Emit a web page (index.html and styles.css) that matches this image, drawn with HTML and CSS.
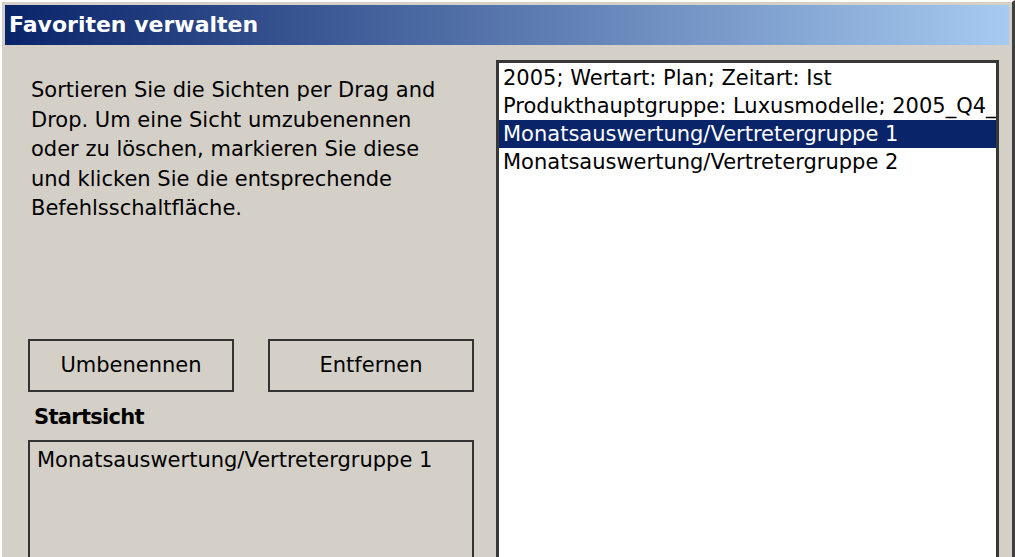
FILE: index.html
```html
<!DOCTYPE html>
<html lang="de">

<head>
  <meta charset="UTF-8">
  <title>Favoriten verwalten</title>
  <link rel="stylesheet" href="styles.css">
</head>

<body>
  <div class="window">
    <div class="titlebar">Favoriten verwalten</div>

    <div class="content">
      <div class="left">
        <p class="intro">Sortieren Sie die Sichten per Drag and Drop. Um eine Sicht umzubenennen oder zu löschen, markieren Sie diese und klicken Sie die entsprechende Befehlsschaltfläche.</p>

        <div class="actions">
          <button class="btn">Umbenennen</button>
          <button class="btn">Entfernen</button>
        </div>

        <div class="start-label">Startsicht</div>
        <div class="start-box">Monatsauswertung/Vertretergruppe 1</div>
      </div>

      <ul class="listbox">
        <li>2005; Wertart: Plan; Zeitart: Ist</li>
        <li>Produkthauptgruppe: Luxusmodelle; 2005_Q4_</li>
        <li class="selected">Monatsauswertung/Vertretergruppe 1</li>
        <li>Monatsauswertung/Vertretergruppe 2</li>
      </ul>
    </div>
  </div>
</body>

</html>
```

FILE: styles.css
```css
body {
  margin: 0;
  padding: 0;
  font-family: "DejaVu Sans", Verdana, sans-serif;
  font-size: 21px;
  color: black;
  background: #d4d0c8;
}

.window {
  width: 1015px;
  height: 557px;
  box-sizing: border-box;
  overflow: hidden;
  background: #d4d0c8;
  border-top: 2px solid #ffffff;
  border-left: 2px solid #ffffff;
  border-right: 3px solid #404040;
  padding: 3px 3px 0 3px;
}

.titlebar {
  height: 40px;
  line-height: 40px;
  padding-left: 4px;
  color: white;
  font-weight: bold;
  font-size: 22px;
  background: linear-gradient(to right, #0a246a, #a6caf0);
  white-space: nowrap;
}

.content {
  display: flex;
  height: 520px;
}

.left {
  width: 446px;
  margin-left: 23px;
  padding-top: 31px;
  display: flex;
  flex-direction: column;
}

.intro {
  margin: 0 0 0 3px;
  width: 420px;
  line-height: 29.5px;
}

.actions {
  display: flex;
  gap: 34px;
  margin-top: 115px;
}

.btn {
  width: 206px;
  height: 53px;
  font-family: inherit;
  font-size: 21px;
  color: black;
  background: #d4d0c8;
  border: 2px solid #333333;
  padding: 0;
}

.start-label {
  margin: 12px 0 0 6px;
  font-weight: bold;
  font-size: 21px;
  line-height: 26px;
  letter-spacing: -0.7px;
}

.start-box {
  margin-top: 10px;
  height: 160px;
  flex-shrink: 0;
  border: 2px solid #333333;
  padding: 4px 7px;
  line-height: 28px;
}

.listbox {
  list-style: none;
  margin: 15px 0 0 22px;
  padding: 1px 0 0 0;
  width: 503px;
  height: 560px;
  flex-shrink: 0;
  box-sizing: border-box;
  background: white;
  border: 3px solid #383838;
  overflow: hidden;
}

.listbox li {
  height: 28px;
  line-height: 28px;
  padding-left: 4px;
  white-space: nowrap;
  overflow: hidden;
}

.listbox li.selected {
  background: #0a246a;
  color: white;
}
```
